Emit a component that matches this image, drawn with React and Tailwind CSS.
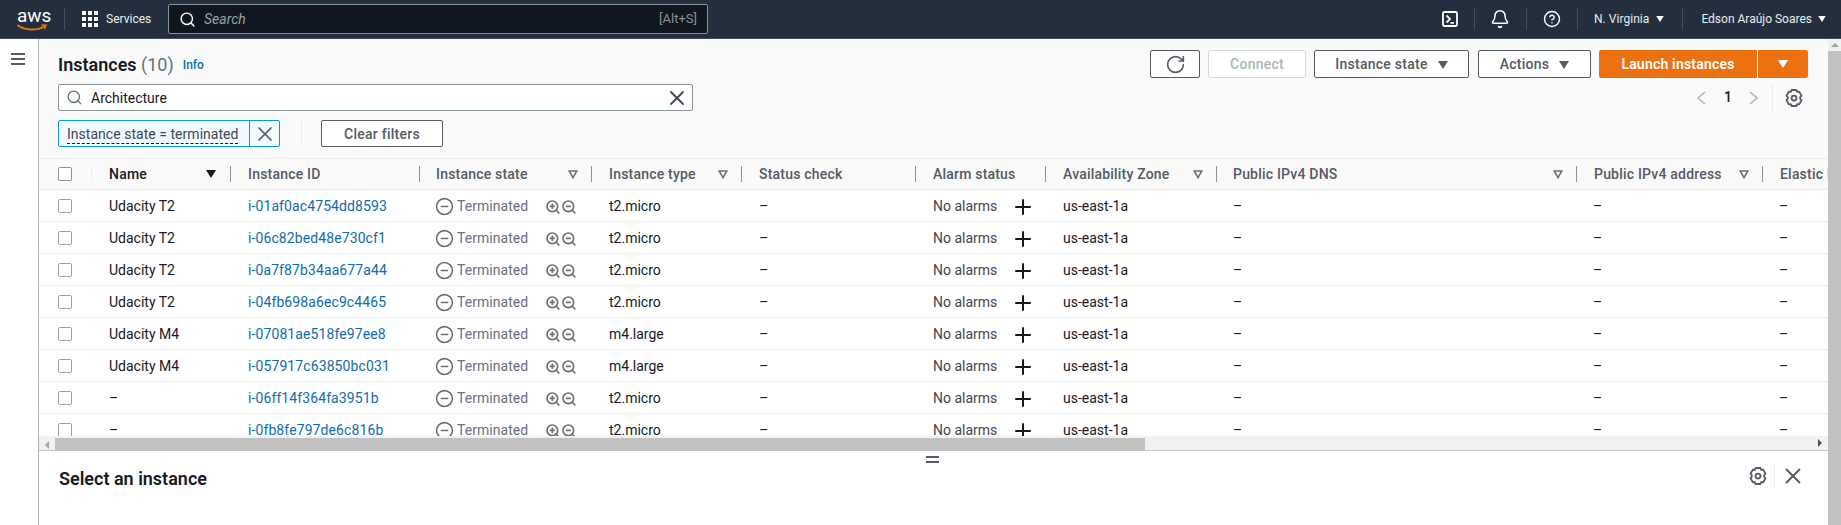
import { Search, X, Plus, ZoomIn, ZoomOut, RotateCw, Bell, CircleHelp, CircleMinus } from 'lucide-react'

const rows = [
  ['Udacity T2', 'i-01af0ac4754dd8593', 't2.micro'],
  ['Udacity T2', 'i-06c82bed48e730cf1', 't2.micro'],
  ['Udacity T2', 'i-0a7f87b34aa677a44', 't2.micro'],
  ['Udacity T2', 'i-04fb698a6ec9c4465', 't2.micro'],
  ['Udacity M4', 'i-07081ae518fe97ee8', 'm4.large'],
  ['Udacity M4', 'i-057917c63850bc031', 'm4.large'],
  ['–', 'i-06ff14f364fa3951b', 't2.micro'],
  ['–', 'i-0fb8fe797de6c816b', 't2.micro'],
]

const cols = 'grid grid-cols-[53px_139px_189px_172px_150px_174px_130px_171px_360px_186px_300px]'

function Caret({ className }) {
  return (
    <svg viewBox="0 0 10 8" className={className} fill="currentColor">
      <path d="M0 0h10L5 8z" />
    </svg>
  )
}

function FilterIcon() {
  return (
    <svg viewBox="0 0 10 9" className="h-[9px] w-[10px] text-[#687078]" fill="none" stroke="currentColor" strokeWidth="1.6">
      <path d="M1.2 1h7.6L5 7.6z" />
    </svg>
  )
}

function Gear({ className }) {
  return (
    <svg viewBox="0 0 16 16" className={className} fill="none" stroke="currentColor" strokeWidth="1.6">
      <path d="M5.8 .9h4.4l.6 1.7 1.8-.3 2.1 3.7-1.2 1.3v1.4l1.2 1.3-2.1 3.7-1.8-.3-.6 1.7H5.800l-.6-1.700-1.800.3L1.300 9.800l1.200-1.300V7.300L1.300 6l2.100-3.700 1.800.3z" strokeLinejoin="round" />
      <circle cx="8" cy="8" r="2.200" />
    </svg>
  )
}

function Chevron({ dir }) {
  return (
    <svg viewBox="0 0 10 14" className="h-[14px] w-[10px] text-[#aab7b8]" fill="none" stroke="currentColor" strokeWidth="1.600">
      <path d={dir === 'left' ? 'M9 1L2 7l7 6' : 'M1 1l7 6-7 6'} />
    </svg>
  )
}

function HeaderCell({ label, filter, dark, sort, inset }) {
  return (
    <div className={`flex h-full items-center font-medium tracking-[0.2px] whitespace-nowrap ${inset ? 'pl-[16px]' : 'pl-[17px]'} ${dark ? 'text-[#16191f]' : 'text-[#545b64]'}`}>
      <span>{label}</span>
      <span className="flex-1" />
      {filter && <span className="mr-[13px] flex"><FilterIcon /></span>}
      {sort && <span className="mr-[14px] flex"><Caret className="h-[8px] w-[10px] text-[#16191f]" /></span>}
      <span className="h-[16px] w-px bg-[#879596]" />
    </div>
  )
}

function Row({ row }) {
  const [name, id, type] = row
  return (
    <div className={`${cols} h-[32px] items-center border-b border-[#eaeded] bg-white pt-[2px] text-[#16191f]`}>
      <div className="-mt-[2px] pl-[19px]"><span className="block h-[14px] w-[14px] rounded-[2px] border border-[#95a5a6] bg-white" /></div>
      <div className="pl-[17px]">{name}</div>
      <div className="pl-[17px] tracking-[0.1px] text-[#0f6cab]">{id}</div>
      <div className="flex items-center pl-[15px] text-[#687078]">
        <CircleMinus className="h-[19px] w-[19px]" strokeWidth={2} />
        <span className="ml-[3px] w-[89px] tracking-[0.05px]">Terminated</span>
        <ZoomIn className="h-[16px] w-[16px] -ml-[1px]" strokeWidth={2.4} />
        <ZoomOut className="h-[16px] w-[16px]" strokeWidth={2.4} />
      </div>
      <div className="pl-[17px]">{type}</div>
      <div className="pl-[17px]">–</div>
      <div className="flex items-center pl-[17px] text-[#414750]">
        <span className="w-[78px]">No alarms</span>
        <Plus className="h-[24px] w-[24px] text-[#16191f]" strokeWidth={2} />
      </div>
      <div className="pl-[17px]">us-east-1a</div>
      <div className="pl-[16px]">–</div>
      <div className="pl-[16px]">–</div>
      <div className="pl-[16px]">–</div>
    </div>
  )
}

function OutlineBtn({ children, className = '' }) {
  return (
    <button className={`flex h-[28px] items-center justify-center rounded-[2px] border border-[#545b64] bg-white pt-px font-medium tracking-[0.25px] text-[#545b64] ${className}`}>
      {children}
    </button>
  )
}

export default function App() {
  return (
    <div className="flex h-screen w-screen flex-col overflow-hidden bg-white text-[14px] text-[#16191f]" style={{ fontFamily: 'Roboto, "Noto Sans", sans-serif' }}>
      {/* top nav */}
      <header className="flex h-[39px] shrink-0 items-center border-b border-[#414d5c] bg-[#232f3e] text-[12px] text-[#eaeded]">
        <div className="relative ml-[17px] h-[26px] w-[30px]">
          <span className="block text-center text-[19px] leading-[19px] text-white">aws</span>
          <svg viewBox="0 0 30 8" className="absolute top-[18px] left-0 h-[8px] w-[30px]" fill="none">
            <path d="M1 1.5c7 5 19 5.5 26 1" stroke="#ec7211" strokeWidth="2" strokeLinecap="round" />
            <path d="M24.5 1l4.5.2-1.600 4" stroke="#ec7211" strokeWidth="1.400" />
          </svg>
        </div>
        <span className="ml-[17px] h-[22px] w-px bg-[#414d5c]" />
        <svg viewBox="0 0 16 16" className="ml-[17px] h-[16px] w-[16px]" fill="#fff">
          {[0, 6, 12].map(y => [0, 6, 12].map(x => <rect key={`${x}-${y}`} x={x} y={y} width="4" height="4" />))}
        </svg>
        <span className="ml-[8px] w-[44px] whitespace-nowrap">Services</span>
        <div className="ml-[18px] flex h-[30px] w-[540px] items-center rounded-[2px] border border-[#879596] bg-[#0f1620] pr-[10px] pl-[10px]">
          <Search className="h-[17px] w-[17px] text-white" strokeWidth={2} />
          <span className="ml-[8px] text-[14px] text-[#95a5a6] italic">Search</span>
          <span className="ml-auto text-[13px] text-[#879596]">[Alt+S]</span>
        </div>
        <div className="flex-1" />
        <svg viewBox="0 0 16 16" className="h-[16px] w-[16px]" fill="none" stroke="#fff" strokeWidth="1.800">
          <rect x="1" y="1" width="14" height="14" rx="1.500" />
          <path d="M4.500 4.500L8 8l-3.500 3.500M8.500 11.800H12" />
        </svg>
        <span className="ml-[16px] h-[22px] w-px bg-[#414d5c]" />
        <Bell className="ml-[15px] h-[20px] w-[20px] text-white" strokeWidth={1.800} />
        <span className="ml-[16px] h-[22px] w-px bg-[#414d5c]" />
        <CircleHelp className="ml-[16px] h-[18px] w-[18px] text-white" strokeWidth={1.900} />
        <span className="ml-[16px] h-[22px] w-px bg-[#414d5c]" />
        <span className="ml-[16px] tracking-[0.05px] whitespace-nowrap">N. Virginia</span>
        <Caret className="ml-[7px] h-[6px] w-[8px] text-white" />
        <span className="ml-[18px] h-[22px] w-px bg-[#414d5c]" />
        <span className="ml-[18px] whitespace-nowrap">Edson Araújo Soares</span>
        <Caret className="mr-[15px] ml-[6px] h-[6px] w-[8px] text-white" />
      </header>

      <div className="flex min-h-0 flex-1">
        {/* side nav */}
        <aside className="w-[39px] shrink-0 border-r border-[#aab7b8] bg-white pt-[14px] pl-[11px]">
          <div className="flex h-[12px] w-[14px] flex-col justify-between">
            <span className="h-[2px] bg-[#545b64]" />
            <span className="h-[2px] bg-[#545b64]" />
            <span className="h-[2px] bg-[#545b64]" />
          </div>
        </aside>

        <main className="flex min-w-0 flex-1 flex-col">
          {/* toolbar */}
          <section className="h-[119px] shrink-0 bg-[#fafafa] pt-[11px] pr-[20px] pl-[19px]">
            <div className="flex h-[28px] items-center">
              <h1 className="text-[18px] font-semibold">Instances <span className="font-normal text-[#687078]">(10)</span></h1>
              <a className="ml-[9px] pt-[2px] text-[12px] font-medium text-[#0f6cab]">Info</a>
              <div className="flex-1" />
              <OutlineBtn className="w-[50px]"><RotateCw className="h-[21px] w-[21px]" strokeWidth={1.800} /></OutlineBtn>
              <button className="ml-[8px] h-[28px] w-[98px] rounded-[2px] border border-[#d5dbdb] bg-white pt-px font-medium tracking-[0.25px] text-[#aab7b8]">Connect</button>
              <OutlineBtn className="ml-[8px] w-[155px]">Instance state<Caret className="ml-[10px] h-[8px] w-[10px]" /></OutlineBtn>
              <OutlineBtn className="ml-[9px] w-[113px]">Actions<Caret className="ml-[10px] h-[8px] w-[10px]" /></OutlineBtn>
              <div className="ml-[8px] flex h-[28px] text-white">
                <button className="w-[158px] rounded-l-[2px] bg-[#ec7211] pt-px font-semibold tracking-[0.2px]">Launch instances</button>
                <button className="ml-px flex w-[50px] items-center justify-center rounded-r-[2px] bg-[#ec7211]"><Caret className="h-[8px] w-[10px]" /></button>
              </div>
            </div>
            <div className="mt-[6px] flex h-[27px] items-center">
              <div className="flex h-full w-[635px] items-center rounded-[2px] border border-[#879596] bg-white pr-[3px] pl-[7px]">
                <Search className="h-[17px] w-[17px] text-[#687078]" strokeWidth={1.900} />
                <span className="ml-[8px] pt-px">Architecture</span>
                <X className="ml-auto h-[24px] w-[24px] text-[#414750]" strokeWidth={1.800} />
              </div>
              <div className="flex-1" />
              <Chevron dir="left" />
              <span className="ml-[18px] w-[11px] font-medium">1</span>
              <span className="ml-[14px] flex"><Chevron dir="right" /></span>
              <span className="ml-[13px] h-[28px] w-px bg-[#eaeded]" />
              <Gear className="mr-[5px] ml-[12px] h-[18px] w-[18px] text-[#545b64]" />
            </div>
            <div className="mt-[9px] flex h-[27px] items-center">
              <div className="flex h-full w-[222px] items-stretch rounded-[2px] border border-[#00a1c9] bg-[#f1faff]">
                <span className="flex w-[190px] items-center pt-px pl-[8px] text-[#414750]">
                  <span className="border-b border-dashed border-[#16191f] leading-[18px] tracking-[0.03px] whitespace-nowrap">Instance state = terminated</span>
                </span>
                <span className="flex flex-1 items-center justify-center border-l border-[#00a1c9]">
                  <X className="h-[24px] w-[24px] text-[#545b64]" strokeWidth={1.700} />
                </span>
              </div>
              <span className="ml-[21px] h-full w-px bg-[#eaeded]" />
              <OutlineBtn className="ml-[19px] !h-[27px] w-[122px]">Clear filters</OutlineBtn>
            </div>
          </section>

          {/* table */}
          <div className="h-[278px] shrink-0 overflow-hidden border-t border-[#eaeded]">
            <div className={`${cols} h-[31px] items-center border-b border-[#eaeded] bg-[#fafafa]`}>
              <div className="flex h-full items-center justify-between pl-[19px]">
                <span className="block h-[14px] w-[14px] rounded-[2px] border border-[#879596] bg-white" />
                <span className="h-[16px] w-px bg-[#eaeded]" />
              </div>
              <HeaderCell label="Name" dark sort />
              <HeaderCell label="Instance ID" />
              <HeaderCell label="Instance state" filter inset />
              <HeaderCell label="Instance type" filter />
              <HeaderCell label="Status check" />
              <HeaderCell label="Alarm status" />
              <HeaderCell label="Availability Zone" filter />
              <HeaderCell label="Public IPv4 DNS" filter inset />
              <HeaderCell label="Public IPv4 address" filter />
              <HeaderCell label="Elastic IP" />
            </div>
            {rows.map(r => <Row key={r[1]} row={r} />)}
          </div>

          {/* horizontal scrollbar */}
          <div className="relative flex h-[14px] shrink-0 bg-[#f1f1f1]">
            <span className="mt-[5px] ml-[6px] h-0 w-0 border-y-[4px] border-r-[4px] border-y-transparent border-r-[#a3a3a3]" />
            <span className="mt-[2px] ml-[6px] h-[12px] w-[1090px] bg-[#c1c1c1]" />
            <span className="mt-[3px] ml-auto mr-[6px] h-0 w-0 border-y-[4px] border-l-[4px] border-y-transparent border-l-[#505050]" />
          </div>

          {/* split panel */}
          <section className="relative flex flex-1 items-start justify-between border-t border-[#c4c4c4] bg-white pt-[17px] pr-[22px] pl-[20px]">
            <div className="absolute top-[5px] left-[887px] flex h-[7px] w-[13px] flex-col justify-between">
              <span className="h-[2px] bg-[#545b64]" />
              <span className="h-[2px] bg-[#545b64]" />
            </div>
            <h2 className="text-[18px] leading-[22px] font-semibold">Select an instance</h2>
            <div className="-mt-[5px] flex items-center text-[#545b64]">
              <Gear className="h-[18px] w-[18px]" />
              <span className="ml-[7px] h-[24px] w-px bg-[#eaeded]" />
              <X className="ml-[5px] h-[26px] w-[26px]" strokeWidth={1.700} />
            </div>
          </section>
        </main>

        {/* page scrollbar */}
        <div className="flex w-[13px] shrink-0 flex-col bg-[#f1f1f1]">
          <div className="flex h-[12px] items-center justify-center">
            <span className="h-0 w-0 border-x-[4px] border-b-[4px] border-x-transparent border-b-[#a3a3a3]" />
          </div>
          <div className="flex-1 bg-[#c1c1c1]" />
        </div>
      </div>
    </div>
  )
}
